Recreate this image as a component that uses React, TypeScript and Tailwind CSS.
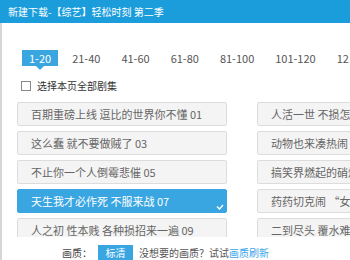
const font = "font-['Microsoft_YaHei','Noto_Sans_CJK_SC',sans-serif]";

const tabs = ["1-20", "21-40", "41-60", "61-80", "81-100", "101-120", "121-140"];

const left = [
  "百期重磅上线 逗比的世界你不懂 01",
  "这么蠢 就不要做贼了 03",
  "不止你一个人倒霉悲催 05",
  "天生我才必作死 不服来战 07",
  "人之初 性本贱 各种损招来一遍 09",
];

const right = [
  "人活一世 不损怎行 02",
  "动物也来凑热闹 呆萌萌哒 04",
  "搞笑界燃起的硝烟弥漫 06",
  "药药切克闹 “女神”来了 08",
  "二到尽头 覆水难收 10",
];

function Episode({ label, active }: { label: string; active?: boolean }) {
  return (
    <div
      className={
        "relative flex h-[24px] shrink-0 items-center whitespace-nowrap rounded-[2px] border pl-[13px] text-[11px] " +
        (active
          ? "border-[#39a6e2] bg-[#39a6e2] text-white"
          : "border-[#dcdcdc] bg-[#f4f4f4] text-[#666]")
      }
    >
      {label}
      {active && (
        <svg
          aria-hidden="true"
          viewBox="0 0 8 6"
          className="absolute bottom-[2px] right-[2px] h-[6px] w-[8px]"
        >
          <polyline points="1,2.5 3.5,5 7,1" fill="none" stroke="white" strokeWidth="1.4" />
        </svg>
      )}
    </div>
  );
}

export default function App() {
  return (
    <div className={`relative h-[260px] w-[350px] overflow-hidden bg-white ${font}`}>
      <div className="flex h-[23px] items-center bg-[#1b9ddc] pl-[8px] text-[10px] text-white">
        新建下载-【综艺】轻松时刻 第二季
      </div>

      <div className="flex h-[237px] flex-col border-l-2 border-[#d6d6d6]">
        <div className="ml-[20px] mt-[27px] flex gap-[7px] whitespace-nowrap text-[11px] text-[#555]">
          {tabs.map((t, i) => (
            <div
              key={t}
              className={
                "relative flex h-[16px] items-center px-[7px] " +
                (i === 0 ? "bg-[#3aa6e0] text-white" : "")
              }
            >
              {t}
              {i === 0 && (
                <span className="absolute left-1/2 top-full -ml-[4px] h-0 w-0 border-x-[4px] border-t-[4px] border-x-transparent border-t-[#3aa6e0]" />
              )}
            </div>
          ))}
        </div>

        <label className="ml-[19px] mt-[12px] flex items-center gap-[6px] text-[10px] text-[#333]">
          <span className="h-[10px] w-[10px] border border-[#888] bg-white" />
          选择本页全部剧集
        </label>

        <div className="ml-[15px] mt-[9px] flex h-[139px] gap-[30px] overflow-hidden">
          <div className="flex w-[210px] shrink-0 flex-col gap-[5px]">
            {left.map((l, i) => (
              <Episode key={l} label={l} active={i === 3} />
            ))}
          </div>
          <div className="flex w-[210px] shrink-0 flex-col gap-[5px]">
            {right.map((r) => (
              <Episode key={r} label={r} />
            ))}
          </div>
        </div>

        <div className="mt-[8px] flex items-center pl-[60px] text-[10px] text-[#444]">
          <span>画质：</span>
          <span className="ml-[6px] flex h-[15px] w-[35px] items-center justify-center bg-[#39a6e2] text-white">
            标清
          </span>
          <span className="ml-[6px] text-[#555]">没想要的画质？试试</span>
          <span className="text-[#3aa6e8]">画质刷新</span>
        </div>
      </div>
    </div>
  );
}
